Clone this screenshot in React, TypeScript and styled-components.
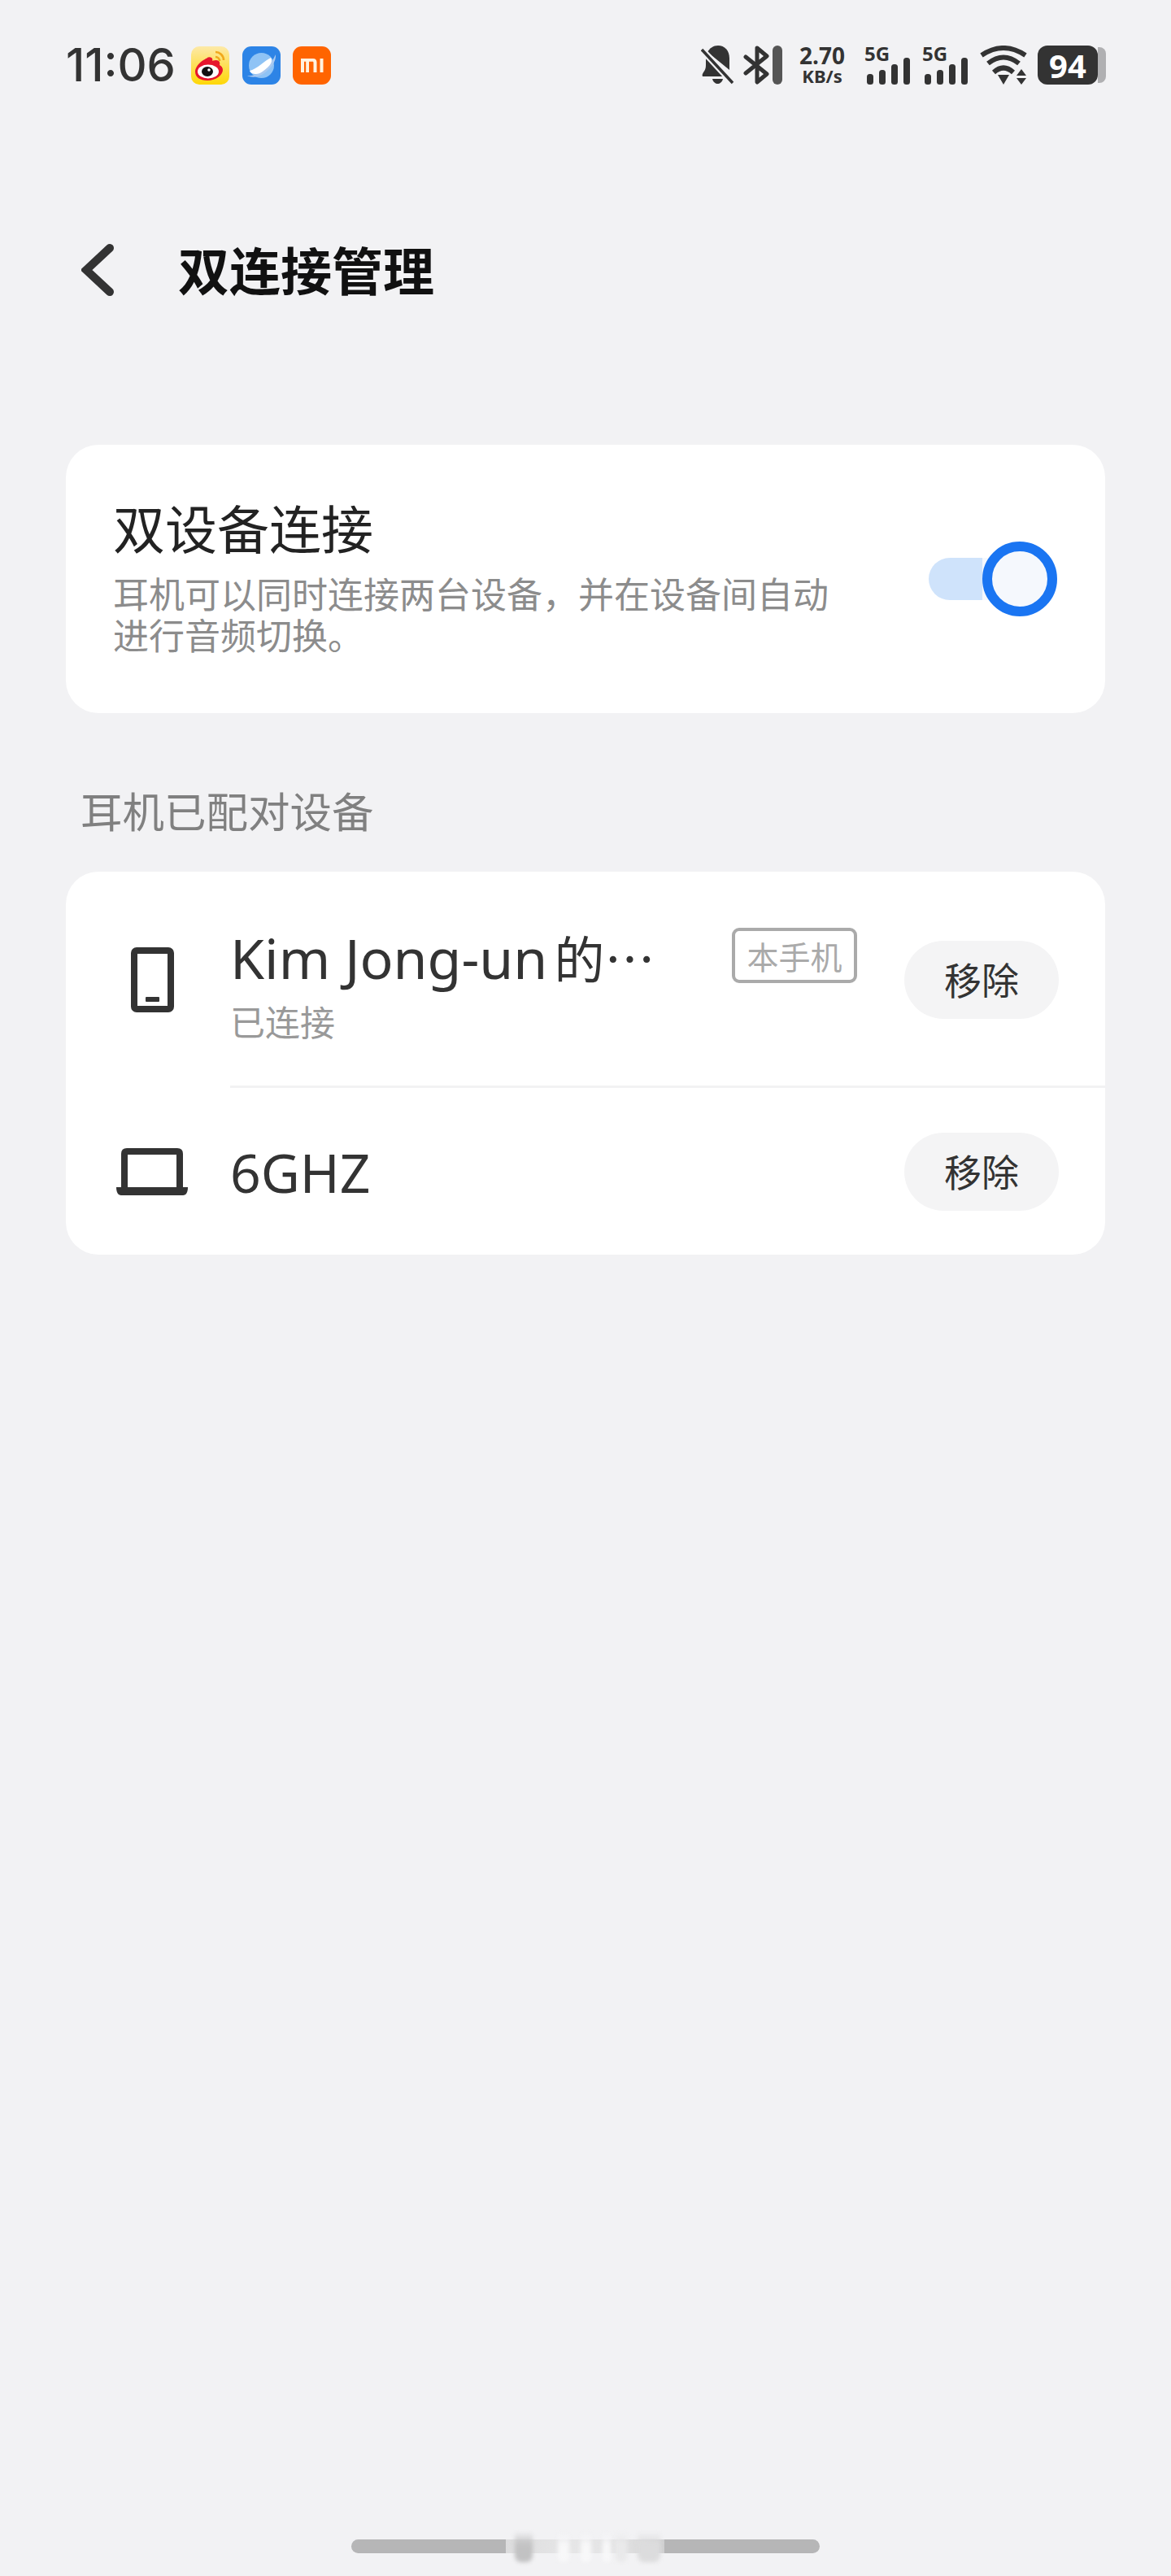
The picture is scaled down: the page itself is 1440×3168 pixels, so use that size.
import styled, { createGlobalStyle } from "styled-components";

const GlobalStyle = createGlobalStyle`
    html, body {
        margin: 0;
        padding: 0;
        background: #f2f2f4;
    }
    * {
        box-sizing: border-box;
    }
`;

const FONT = `"Noto Sans", "Noto Sans CJK SC", sans-serif`;
const CJK = `"Noto Sans CJK SC", "Noto Sans", sans-serif`;

const Page = styled.div`
    width: 1440px;
    height: 3168px;
    padding-top: 56px;
    display: flex;
    flex-direction: column;
    background: #f2f2f4;
    font-family: ${FONT};
    overflow: hidden;
`;

const StatusBar = styled.div`
    height: 48px;
    padding: 0 80px 0 81px;
    display: flex;
    align-items: center;
`;

const Time = styled.div`
    width: 154px;
    font-family: Inter, ${FONT};
    font-size: 56px;
    font-weight: 500;
    line-height: 48px;
    color: #333;
`;

const AppIcons = styled.div`
    display: flex;
    gap: 16px;
    svg:last-child {
        margin-left: -1px;
    }
`;

const SystemIcons = styled.div`
    margin-left: auto;
    display: flex;
    align-items: center;
    svg:first-child {
        margin-right: 11px;
    }
`;

const BlueBar = styled.div`
    width: 12px;
    height: 48px;
    margin-left: 4px;
    border-radius: 6px;
    background: #555;
`;

const Speed = styled.div`
    width: 60px;
    margin: 0 22px 0 19px;
    display: flex;
    flex-direction: column;
    align-items: center;
    color: #333;
    font-weight: 700;
`;

const SpeedValue = styled.span`
    font-size: 28px;
    line-height: 27px;
`;

const SpeedUnit = styled.span`
    font-size: 22px;
    line-height: 23px;
`;

const Signal = styled.div`
    width: 56px;
    height: 48px;
    margin-right: 15px;
    display: grid;
    color: #333;
    svg {
        grid-area: 1 / 1;
        align-self: end;
        justify-self: end;
    }
`;

const SignalLabel = styled.span`
    grid-area: 1 / 1;
    font-size: 24px;
    font-weight: 700;
    line-height: 20px;
`;

const Battery = styled.div`
    width: 74px;
    height: 48px;
    margin-left: 13px;
    border-radius: 12px;
    display: flex;
    align-items: center;
    justify-content: center;
    background: #333;
    color: #fff;
    font-size: 40px;
    font-weight: 700;
`;

const BatteryNub = styled.div`
    width: 10px;
    height: 44px;
    border-radius: 0 8px 8px 0;
    background: #b0b0b2;
`;

const TopBar = styled.div`
    height: 90px;
    margin-top: 183px;
    padding-left: 100px;
    display: flex;
    align-items: center;
`;

const Title = styled.h1`
    margin: -5px 0 0 79px;
    font-family: ${CJK};
    font-size: 63px;
    font-weight: 700;
    line-height: 90px;
    color: #111;
`;

const Card = styled.div`
    width: 1278px;
    margin-left: 81px;
    border-radius: 40px;
    background: #fff;
`;

const SwitchCard = styled(Card)`
    height: 330px;
    margin-top: 170px;
    padding: 60px 59px 72px 58px;
    display: flex;
    align-items: center;
    justify-content: space-between;
`;

const SwitchText = styled.div`
    width: 884px;
    font-family: ${CJK};
`;

const SwitchTitle = styled.div`
    font-size: 64px;
    line-height: 80px;
    color: #222;
`;

const SwitchDesc = styled.div`
    margin-top: 17px;
    font-size: 44px;
    line-height: 51px;
    color: #8c8c8c;
`;

const Toggle = styled.div`
    position: relative;
    width: 158px;
    height: 92px;
    margin-top: 12px;
    flex-shrink: 0;
    display: flex;
    align-items: center;
`;

const ToggleTrack = styled.div`
    width: 146px;
    height: 52px;
    border-radius: 26px;
    background: linear-gradient(90deg, #cfe3fb 0 45%, #f5f8fd 45% 100%);
`;

const ToggleThumb = styled.div`
    position: absolute;
    right: 0;
    top: 0;
    width: 92px;
    height: 92px;
    border: 12px solid #1a75f2;
    border-radius: 50%;
    background: #f5f8fd;
`;

const SectionTitle = styled.div`
    height: 60px;
    margin-top: 89px;
    margin-bottom: 46px;
    padding-left: 99px;
    font-family: ${CJK};
    font-size: 51.500px;
    line-height: 60px;
    color: #808080;
`;

const Row = styled.div<{ $height: number; $top?: number }>`
    height: ${(p) => p.$height}px;
    padding: ${(p) => p.$top ?? 0}px 57px 0 61px;
    display: flex;
    align-items: center;
`;

const IconSlot = styled.div`
    width: 90px;
    margin-right: 51px;
    flex-shrink: 0;
    display: flex;
    justify-content: center;
`;

const Info = styled.div`
    flex: 1;
    margin-top: 10px;
`;

const NameLine = styled.div`
    display: flex;
    align-items: center;
    justify-content: space-between;
    margin-right: 58px;
`;

const Name = styled.div`
    font-size: 68px;
    line-height: 72px;
    color: #333;
    white-space: nowrap;
`;

const SoloName = styled(Name)`
    flex: 1;
    font-size: 66px;
`;

const NameCjk = styled.span`
    font-family: ${CJK};
    font-size: 62px;
    margin-left: 8px;
`;

const Badge = styled.div`
    width: 154px;
    height: 68px;
    margin-top: -4px;
    border: 4px solid #aaa;
    border-radius: 9px;
    display: flex;
    align-items: center;
    justify-content: center;
    font-family: ${CJK};
    font-size: 39px;
    color: #aaa;
`;

const DeviceState = styled.div`
    margin-top: 16px;
    font-family: ${CJK};
    font-size: 43px;
    line-height: 50px;
    color: #999;
`;

const RemoveButton = styled.button`
    width: 190px;
    height: 96px;
    padding: 0 0 4px;
    flex-shrink: 0;
    border: none;
    border-radius: 48px;
    background: #f4f4f5;
    font-family: ${CJK};
    font-size: 46px;
    color: #333;
`;

const Divider = styled.div`
    height: 3px;
    margin-left: 202px;
    background: #f2f2f3;
`;

const HomeBar = styled.div`
    position: relative;
    width: 576px;
    height: 17px;
    margin: auto 0 28px 432px;
    border-radius: 9px;
    background: #b6b6b7;
`;

const HomeBlur = styled.div`
    position: absolute;
    left: 190px;
    top: 0;
    width: 195px;
    height: 17px;
    background: linear-gradient(90deg, #dcdcdd 0, #e6e6e7 40%, #e4e4e5 70%, #cfcfd0 100%);
`;

const BlurStreak = styled.div<{ $left: number; $width: number; $color: string }>`
    position: absolute;
    left: ${(p) => p.$left}px;
    top: -10px;
    width: ${(p) => p.$width}px;
    height: 38px;
    border-radius: 4px 4px 8px 8px;
    background: linear-gradient(180deg, transparent, ${(p) => p.$color} 45%, ${(p) => p.$color});
    filter: blur(2.500px);
`;

function WeiboIcon() {
    return (
        <svg width="47" height="47" viewBox="0 0 47 47">
            <defs>
                <linearGradient id="weiboBg" x1="0" y1="0" x2="0" y2="1">
                    <stop offset="0" stopColor="#fde9a8" />
                    <stop offset="1" stopColor="#fed706" />
                </linearGradient>
            </defs>
            <rect width="47" height="47" rx="10" fill="url(#weiboBg)" />
            <path
                d="M5 31c0-5 5-11 10-14 3-2 7-5 10-3 2 1 1 4 1 4s5-2 8 0c2 2 1 4 1 5 2 1 4 3 4 6 0 6-8 13-19 13C11 42 5 38 5 31z"
                fill="#e6162d"
            />
            <ellipse cx="21" cy="31" rx="13" ry="8.500" fill="#fff" />
            <ellipse cx="20" cy="31" rx="7" ry="6" fill="#111" />
            <circle cx="22" cy="29" r="1.800" fill="#fff" />
            <path d="M30 7c5 0 10 4 10 10" fill="none" stroke="#f1a81c" strokeWidth="2.600" />
            <path d="M30 13c2.500 0 5 2 5 5" fill="none" stroke="#f1a81c" strokeWidth="2.600" />
        </svg>
    );
}

function BrowserIcon() {
    return (
        <svg width="47" height="47" viewBox="0 0 47 47">
            <rect width="47" height="47" rx="11" fill="#2d84e6" />
            <circle cx="23.500" cy="23.500" r="15.500" fill="#8fc3f5" />
            <path d="M6 36c8 1 15-3 21-8s11-11 14-18c1 9-7 18-14 23s-15 6-21 3z" fill="#a9c9f0" />
            <path d="M9 30c4-1 9-4 13-7 5-4 9-7 13-9 2 3 1 7-3 11-4 4-10 9-15 9-4 0-7-1-8-4z" fill="#fff" />
        </svg>
    );
}

function MiIcon() {
    return (
        <svg width="47" height="47" viewBox="0 0 47 47">
            <rect width="47" height="47" rx="11" fill="#ff6400" />
            <path
                d="M10 15h15c3 0 4.500 2 4.500 4.500V32h-4V20c0-.8-.5-1.200-1.200-1.200H20V32h-3.800V18.800H14V32h-4zM33.500 15h4v17h-4z"
                fill="#fff2e0"
            />
        </svg>
    );
}

function BellOffIcon() {
    return (
        <svg width="41" height="48" viewBox="0 0 41 48" fill="#333">
            <path d="M8 8C11 3 15 0 21 0c8 0 14 6 14 16v14z" />
            <path d="M7 14l23 24H2c-1-2 0-3 1-5 2-3 3-5 3-9v-7z" />
            <path d="M14 41h13c-1 4-4 6-6.500 6S15 45 14 41z" />
            <path d="M1 5l38 41" stroke="#f2f2f4" strokeWidth="8" />
            <path d="M1 5l38 41" stroke="#333" strokeWidth="3.500" />
        </svg>
    );
}

function BluetoothIcon() {
    return (
        <svg width="32" height="48" viewBox="0 0 32 48" fill="none" stroke="#333" strokeWidth="5" strokeLinejoin="round" strokeLinecap="round">
            <path d="M3 14l26 21-12 10V3l12 10L3 34" />
        </svg>
    );
}

function SignalBars() {
    return (
        <svg width="53" height="33" viewBox="0 0 53 33" fill="#333">
            <rect x="0" y="20" width="8" height="13" rx="3.500" />
            <rect x="15" y="15" width="8" height="18" rx="3.500" />
            <rect x="30" y="8" width="8" height="25" rx="3.500" />
            <rect x="45" y="0" width="8" height="33" rx="3.500" />
        </svg>
    );
}

function WifiIcon() {
    return (
        <svg width="58" height="48" viewBox="0 0 58 48">
            <g fill="none" stroke="#333" strokeWidth="6">
                <path d="M2 12Q29-6 56 12" />
                <path d="M10 22Q29 7 48 22" />
                <path d="M17 33Q29 22 41 33" />
            </g>
            <path d="M22 36h14l-7 12z" fill="#333" />
            <path d="M51 29l6 8H45z" fill="#333" />
            <path d="M45 40h12l-6 8z" fill="#333" />
        </svg>
    );
}

function PhoneIcon() {
    return (
        <svg width="53" height="80" viewBox="0 0 53 80">
            <rect x="4" y="4" width="45" height="72" rx="3" fill="none" stroke="#333" strokeWidth="8" />
            <rect x="18" y="61" width="17" height="6" rx="1" fill="#333" />
        </svg>
    );
}

function LaptopIcon() {
    return (
        <svg width="88" height="58" viewBox="0 0 88 58">
            <path d="M10 50V7c0-2 1-3 3-3h62c2 0 3 1 3 3v43" fill="none" stroke="#333" strokeWidth="8" />
            <path d="M0 48h88c0 6-2 10-6 10H6c-4 0-6-4-6-10z" fill="#333" />
        </svg>
    );
}

function ChevronIcon() {
    return (
        <svg width="40" height="66" viewBox="0 0 40 66" fill="none" stroke="#333" strokeWidth="10" strokeLinecap="round">
            <path d="M35 6L6 33l29 27" />
        </svg>
    );
}

function App() {
    return (
        <Page>
            <GlobalStyle />
            <StatusBar>
                <Time>11:06</Time>
                <AppIcons>
                    <WeiboIcon />
                    <BrowserIcon />
                    <MiIcon />
                </AppIcons>
                <SystemIcons>
                    <BellOffIcon />
                    <BluetoothIcon />
                    <BlueBar />
                    <Speed>
                        <SpeedValue>2.70</SpeedValue>
                        <SpeedUnit>KB/s</SpeedUnit>
                    </Speed>
                    <Signal>
                        <SignalLabel>5G</SignalLabel>
                        <SignalBars />
                    </Signal>
                    <Signal>
                        <SignalLabel>5G</SignalLabel>
                        <SignalBars />
                    </Signal>
                    <WifiIcon />
                    <Battery>94</Battery>
                    <BatteryNub />
                </SystemIcons>
            </StatusBar>

            <TopBar>
                <ChevronIcon />
                <Title>双连接管理</Title>
            </TopBar>

            <SwitchCard>
                <SwitchText>
                    <SwitchTitle>双设备连接</SwitchTitle>
                    <SwitchDesc>耳机可以同时连接两台设备，并在设备间自动进行音频切换。</SwitchDesc>
                </SwitchText>
                <Toggle>
                    <ToggleTrack />
                    <ToggleThumb />
                </Toggle>
            </SwitchCard>

            <SectionTitle>耳机已配对设备</SectionTitle>

            <Card>
                <Row $height={263} $top={3}>
                    <IconSlot>
                        <PhoneIcon />
                    </IconSlot>
                    <Info>
                        <NameLine>
                            <Name>
                                Kim Jong-un<NameCjk>的⋯</NameCjk>
                            </Name>
                            <Badge>本手机</Badge>
                        </NameLine>
                        <DeviceState>已连接</DeviceState>
                    </Info>
                    <RemoveButton>移除</RemoveButton>
                </Row>
                <Divider />
                <Row $height={205}>
                    <IconSlot>
                        <LaptopIcon />
                    </IconSlot>
                    <SoloName>6GHZ</SoloName>
                    <RemoveButton>移除</RemoveButton>
                </Row>
            </Card>

            <HomeBar>
                <HomeBlur />
                <BlurStreak $left={201} $width={22} $color="#c2c2c3" />
                <BlurStreak $left={254} $width={14} $color="#f8f8f9" />
                <BlurStreak $left={282} $width={13} $color="#f8f8f9" />
                <BlurStreak $left={309} $width={10} $color="#f8f8f9" />
                <BlurStreak $left={325} $width={14} $color="#e9e9ea" />
                <BlurStreak $left={352} $width={28} $color="#dcdcdd" />
            </HomeBar>
        </Page>
    );
}

export default App;
